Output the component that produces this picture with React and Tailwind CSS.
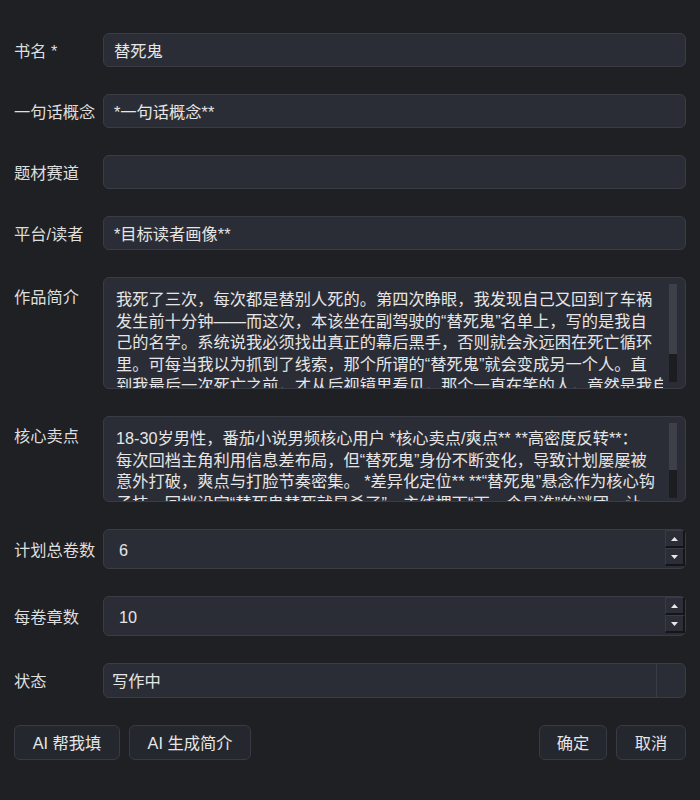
import React from 'react'
import clsx from 'clsx'

const summaryLines = [
  '我死了三次，每次都是替别人死的。第四次睁眼，我发现自己又回到了车祸',
  '发生前十分钟——而这次，本该坐在副驾驶的“替死鬼”名单上，写的是我自',
  '己的名字。系统说我必须找出真正的幕后黑手，否则就会永远困在死亡循环',
  '里。可每当我以为抓到了线索，那个所谓的“替死鬼”就会变成另一个人。直',
  '到我最后一次死亡之前，才从后视镜里看见，那个一直在笑的人，竟然是我自',
  '己。',
]

const pointLines = [
  '18-30岁男性，番茄小说男频核心用户 *核心卖点/爽点** **高密度反转**：',
  '每次回档主角利用信息差布局，但“替死鬼”身份不断变化，导致计划屡屡被',
  '意外打破，爽点与打脸节奏密集。 *差异化定位** **“替死鬼”悬念作为核心钩',
  '子技，回档设定“替死鬼替死就是杀了”，主线埋下“下一个是谁”的谜团，让',
]

function Label({ children, top }) {
  return (
    <div className={clsx('w-[89px] shrink-0 text-[#dedede]', top ? 'self-start pt-[10px]' : 'pt-[3px]')}>
      {children}
    </div>
  )
}

function Field({ children, className }) {
  return (
    <div className={clsx('flex-1 h-full flex rounded-md border border-[#3a3c45] bg-[#2b2d36] text-[#e6e6e6]', className)}>
      {children}
    </div>
  )
}

function Line({ children }) {
  return <Field className="items-center pl-[10px] pt-[3px]">{children}</Field>
}

function TextBox({ lines, bar, thumb }) {
  return (
    <Field className="items-start overflow-hidden pl-3">
      <div className="flex-1 min-w-0 overflow-hidden pt-[11px]">
        {lines.map((l, i) => (
          <div key={i} className="whitespace-nowrap">{l}</div>
        ))}
      </div>
      <div className={clsx('w-2 mt-[6px] mr-2 ml-[6px] shrink-0 bg-[#1c1d21]', bar)}>
        <div className={clsx('w-full bg-[#3e4049]', thumb)} />
      </div>
    </Field>
  )
}

function SpinBtn({ up }) {
  return (
    <div className="w-[20px] h-[18px] flex items-center justify-center bg-[#2c2e37] border-t border-l border-[#3a3c45] border-r-2 border-b-2 border-r-[#141518] border-b-[#141518]">
      <svg width="7" height="4" viewBox="0 0 7 4">
        {up ? <path d="M0 4 L3.5 0 L7 4 Z" fill="#e8e8e8" /> : <path d="M0 0 L7 0 L3.5 4 Z" fill="#e8e8e8" />}
      </svg>
    </div>
  )
}

function Spinner({ value }) {
  return (
    <Field className="items-start pl-[15px]">
      <span className="flex-1 self-center pt-[4px]">{value}</span>
      <div className="flex flex-col">
        <SpinBtn up />
        <SpinBtn />
      </div>
    </Field>
  )
}

function Btn({ children, w }) {
  return (
    <button className={clsx('h-[35px] pt-[3px] rounded-md border border-[#393b44] bg-[#25272e] text-[#e6e6e6]', w)}>
      {children}
    </button>
  )
}

export default function App() {
  return (
    <div className="min-h-screen bg-[#1f2024] font-['Liberation_Sans','Noto_Sans_CJK_SC',sans-serif] text-[16.25px] leading-[21.5px]">
      <div className="px-[14px] pt-[33px] flex flex-col gap-[27px]">
        <div className="flex items-center h-[34px]">
          <Label>书名 *</Label>
          <Line>替死鬼</Line>
        </div>
        <div className="flex items-center h-[34px]">
          <Label>一句话概念</Label>
          <Line>*一句话概念**</Line>
        </div>
        <div className="flex items-center h-[34px]">
          <Label>题材赛道</Label>
          <Line />
        </div>
        <div className="flex items-center h-[34px]">
          <Label>平台/读者</Label>
          <Line>*目标读者画像**</Line>
        </div>
        <div className="flex h-[112px]">
          <Label top>作品简介</Label>
          <TextBox lines={summaryLines} bar="h-[98px]" thumb="h-[70px]" />
        </div>
        <div className="flex h-[86px]">
          <Label top>核心卖点</Label>
          <TextBox lines={pointLines} bar="h-[75px]" thumb="h-[47px]" />
        </div>
        <div className="flex items-center h-[40px]">
          <Label>计划总卷数</Label>
          <Spinner value="6" />
        </div>
        <div className="flex items-center h-[40px]">
          <Label>每卷章数</Label>
          <Spinner value="10" />
        </div>
        <div className="flex items-center h-[35px]">
          <Label>状态</Label>
          <Field className="rounded-lg">
            <span className="flex-1 self-center pl-[8px] pt-[3px]">写作中</span>
            <div className="w-px bg-[#3a3c45]" />
            <div className="w-[28px]" />
          </Field>
        </div>
        <div className="flex items-center justify-between">
          <div className="flex gap-[9px]">
            <Btn w="w-[106px]">AI 帮我填</Btn>
            <Btn w="w-[122px]">AI 生成简介</Btn>
          </div>
          <div className="flex gap-[9px]">
            <Btn w="w-[68px]">确定</Btn>
            <Btn w="w-[70px]">取消</Btn>
          </div>
        </div>
      </div>
    </div>
  )
}
